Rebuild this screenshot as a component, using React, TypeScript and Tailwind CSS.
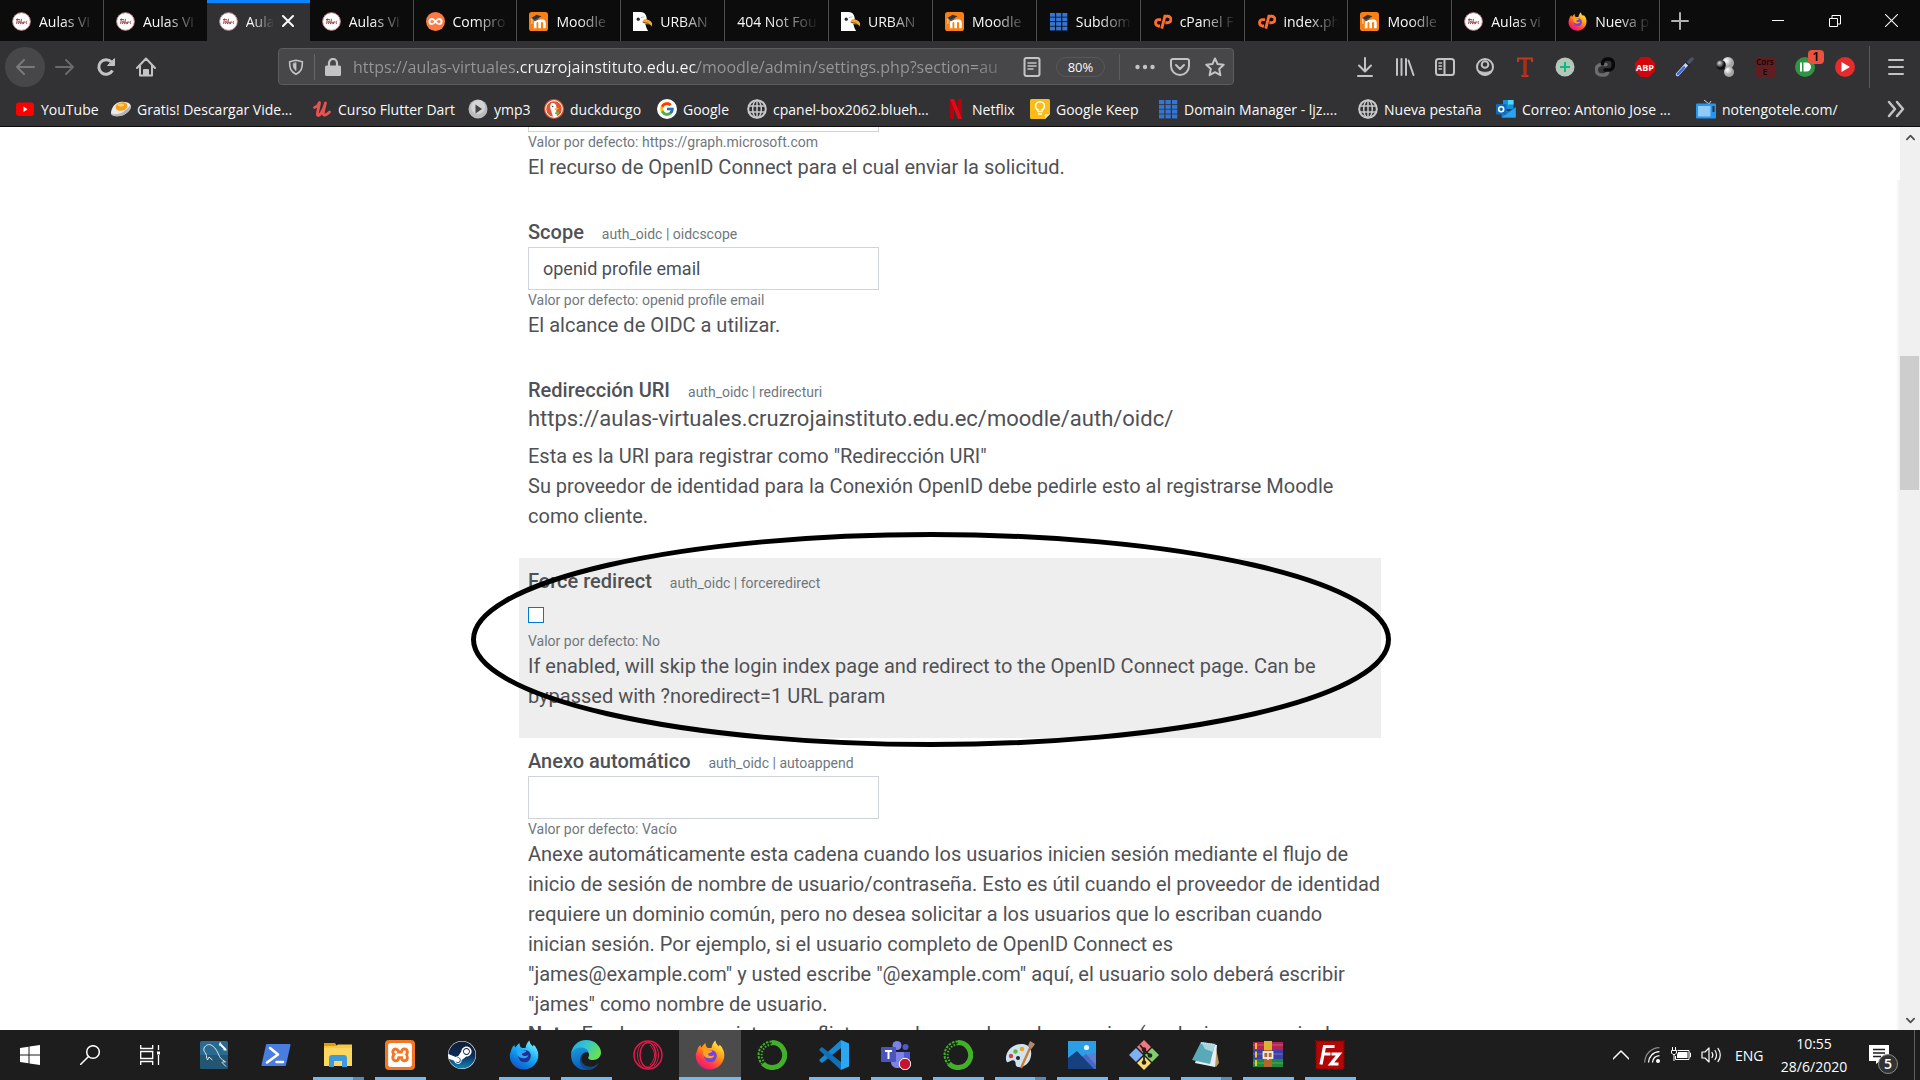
import React, { useState } from "react";
import { FcGoogle } from "react-icons/fc";
import { SiXampp } from "react-icons/si";
import { FaSteam } from "react-icons/fa";

type IconProps = { className?: string };
type Icon = (props: IconProps) => React.ReactElement;

/* ---------- Site icons ---------- */

const Aulas: Icon = ({ className }) => (
  <svg viewBox="0 0 20 20" className={className} aria-hidden="true">
    <circle cx="10" cy="10" r="9.3" fill="#fff" stroke="#c98f93" strokeWidth="1" />
    <path
      d="M4.500 8l1.300-.8-1 5.300M6.300 12c1.500.3 2.500-2.600 1.400-2.600s-2 3-.2 3M10 7.200L9 12.700c.4-2 1.700-3 2-2s-.6 2 .3 1.900M12.500 10l-.4 2.400c.5-1.800 1.300-2.600 1.800-2M16 9.500c-1.300 0-1.600 3-.2 2.900M4.500 8h4"
      fill="none"
      stroke="#9c3a40"
      strokeWidth="1"
    />
  </svg>
);

const Moodle: Icon = ({ className }) => (
  <svg viewBox="0 0 20 20" className={className} aria-hidden="true">
    <rect width="20" height="20" rx="3" fill="#f98012" />
    <path
      d="M6.500 17V11.500c0-3.200 4.700-3.200 4.700 0V17M11.200 11.500c0-3.200 5-3.200 5 0V17"
      fill="none"
      stroke="#fff"
      strokeWidth="2.800"
    />
    <path d="M2 6.500L8 3l5 1.500-6.500 4.200z" fill="#333" />
    <path d="M3 6.500v6" stroke="#fff" strokeWidth=".8" />
    <path d="M5 8.500l5-2.500v2l-4 2z" fill="#555" />
  </svg>
);

const Compro: Icon = ({ className }) => (
  <svg viewBox="0 0 20 20" className={className} aria-hidden="true">
    <circle cx="10" cy="10" r="10" fill="#ff7a42" />
    <path
      d="M10 10c-1.500-2-2.500-2.700-3.700-2.700a2.700 2.700 0 100 5.400C7.500 12.700 8.500 12 10 10s2.500-2.700 3.700-2.700a2.700 2.700 0 110 5.400C12.500 12.700 11.500 12 10 10z"
      fill="none"
      stroke="#fff"
      strokeWidth="2"
    />
  </svg>
);

const Gull: Icon = ({ className }) => (
  <svg viewBox="0 0 20 20" className={className} aria-hidden="true">
    <path d="M0 0h8c4 0 6 3 6.500 6.500L13 11c0 3 1 6 3 9H0z" fill="#fff" />
    <path d="M11 8c3-1 7 0 9 3.500v4c-1-2-2.500-2.500-4.500-2.500-2 0-4-1-5-2.500z" fill="#f7a934" />
    <path d="M10 10.500c2 1 4.500 1 6.500 1.500" stroke="#7a4b10" fill="none" />
    <circle cx="5.500" cy="7.500" r="1.700" fill="#222" />
    <path d="M8 6l4-1" stroke="#aaa" strokeWidth=".8" />
  </svg>
);

const GridIcon: Icon = ({ className }) => (
  <svg viewBox="0 0 20 20" className={className} aria-hidden="true">
    <g fill="#3575d3">
      {[1, 7.5, 14].map((x) =>
        [1, 5.8, 10.6, 15.4].map((y) => <rect key={x + "-" + y} x={x} y={y} width="5.300" height="4" />)
      )}
    </g>
  </svg>
);

const CPanel: Icon = ({ className }) => (
  <svg viewBox="0 0 20 20" className={className} aria-hidden="true">
    <g fill="none" stroke="#ff6c2c" strokeWidth="3">
      <path d="M8.500 8H5.500a3.400 3.400 0 000 6.700h2" />
      <path d="M9.200 17.500L12.500 4.500h3a3.300 3.300 0 010 6.800h-2.500" />
    </g>
  </svg>
);

const Fox = ({ className, blue = false }: IconProps & { blue?: boolean }) => {
  const id = blue ? "foxBlue" : "foxOrange";
  return (
    <svg viewBox="0 0 30 30" className={className} aria-hidden="true">
      <defs>
        <linearGradient id={id} x1="0.850" y1="0.050" x2="0.250" y2="1">
          <stop offset="0" stopColor={blue ? "#7df3ff" : "#fff24a"} />
          <stop offset="0.400" stopColor={blue ? "#1fb4f5" : "#ff980e"} />
          <stop offset="0.750" stopColor={blue ? "#0a7be0" : "#ff3647"} />
          <stop offset="1" stopColor={blue ? "#2450b8" : "#e31587"} />
        </linearGradient>
      </defs>
      <path
        d="M2 11c.5-3 2-5 3.500-6 0 1 .5 2 1 2.500C7.500 6 9 4 10.500 3c0 2.500.5 4 2.500 5h3.500C17 5 18 2.500 20.500.5c0 3 2 4 3.500 6 .3-.6.500-1.200.5-2 3 3 4.800 6.500 4.800 10.500C29.300 23 23 29.500 15 29.500S.8 23.300.8 16c0-2 .4-3.500 1.200-5z"
        fill={`url(#${id})`}
      />
      <circle cx="15.500" cy="16" r="6.300" fill={blue ? "#20308f" : "#7542e5"} />
      <path
        d="M6.500 8.500c3-.8 5.500.2 6.500 1.500l4.500.5c-.4 1.800-2.500 2.300-4 3-1 .7-.6 1.800 1 2.300 2 .7 4-.8 5-.3-1.500 3-5.500 3.500-8.500 2-2.500-1.400-3.500-4-2.500-6z"
        fill={blue ? "#2ba5f7" : "#ffa41b"}
      />
    </svg>
  );
};

const FoxTab: Icon = ({ className }) => <Fox className={className} />;

const YouTube: Icon = ({ className }) => (
  <svg viewBox="0 0 20 20" className={className} aria-hidden="true">
    <rect x="1" y="3.500" width="18" height="13.500" rx="3" fill="#f00" />
    <path d="M8.500 7.500l4 2.700-4 2.800z" fill="#fff" />
  </svg>
);

const Egg: Icon = ({ className }) => (
  <svg viewBox="0 0 20 20" className={className} aria-hidden="true">
    <path d="M0 14c0-3 2-8 6-10s12-1.500 13.500 2-2 7-6 9.500S0 18 0 14z" fill="#e9e9e9" />
    <path d="M0 14c3 2.500 9 1 12-1s6-5 7.500-7c1 4-3 8-7 10S0 18 0 14z" fill="#b5b5b5" />
    <ellipse cx="10.500" cy="7.500" rx="6" ry="4.200" fill="#fb9e17" transform="rotate(-15 10.500 7.500)" />
    <ellipse cx="10" cy="6" rx="3" ry="1.500" fill="#ffd36b" />
  </svg>
);

const Udemy: Icon = ({ className }) => (
  <svg viewBox="0 0 20 20" className={className} aria-hidden="true">
    <path
      d="M2.500 8.500C4.500 8 6.500 6 7.500 3.500 7.500 8 4.500 14 5.500 16c1.500 2 5.500-3 8-12-1.500 6-3 11-1.500 12 1.500.5 3.500-1 5.500-3"
      fill="none"
      stroke="#ea5252"
      strokeWidth="2.800"
      strokeLinecap="round"
      strokeLinejoin="round"
    />
  </svg>
);

const Ymp3: Icon = ({ className }) => (
  <svg viewBox="0 0 20 20" className={className} aria-hidden="true">
    <circle cx="10" cy="10" r="9.500" fill="#b9bcbb" />
    <circle cx="10" cy="8" r="7" fill="#d3d5d4" />
    <path d="M7.500 5.500l6.500 4.500-6.500 4.500z" fill="#444" />
  </svg>
);

const Duck: Icon = ({ className }) => (
  <svg viewBox="0 0 20 20" className={className} aria-hidden="true">
    <circle cx="10" cy="10" r="10" fill="#de5833" />
    <circle cx="10" cy="10" r="8.300" fill="none" stroke="#fff" strokeWidth="1" />
    <path d="M7 4.500c3-1.500 5.500.5 5.500 4v2c-1 2 .5 5 .5 7.300-2 .6-3.500.4-4 0C8 14 6.500 10 6 7.500z" fill="#fff" />
    <path d="M10.500 9.500l4.500-.6c0 1-2 1.500-4.300 2.200z" fill="#fdb913" />
    <path d="M11 13.500l3.500-1v3l-3.500-.5z" fill="#66bd47" />
    <circle cx="8.700" cy="7.500" r=".8" fill="#2d4f8e" />
  </svg>
);

const Google: Icon = ({ className }) => (
  <span className={`${className} flex items-center justify-center rounded-full bg-white`}>
    <FcGoogle size={16} />
  </span>
);

const Globe: Icon = ({ className }) => (
  <svg viewBox="0 0 20 20" className={className} fill="none" stroke="#c9c9ca" strokeWidth="1.500" aria-hidden="true">
    <circle cx="10" cy="10" r="8.800" strokeWidth="2" />
    <ellipse cx="10" cy="10" rx="4.300" ry="8.800" />
    <path d="M10 1v18M2 7h16M2 13h16" />
  </svg>
);

const Netflix: Icon = ({ className }) => (
  <svg viewBox="0 0 20 20" className={className} aria-hidden="true">
    <path d="M4 0h4v20H4zM12 0h4v20h-4z" fill="#b1060f" />
    <path d="M4 0h4l8 20h-4z" fill="#e50914" />
  </svg>
);

const Keep: Icon = ({ className }) => (
  <svg viewBox="0 0 20 20" className={className} aria-hidden="true">
    <path d="M1.500 0h17A1.500 1.500 0 0120 1.500V15l-5 5H1.500A1.500 1.500 0 010 18.500v-17A1.500 1.500 0 011.500 0z" fill="#fbbc18" />
    <path d="M15 20v-5h5z" fill="#fde293" />
    <path
      d="M8 12.500v-1.500C6 9.800 5.500 8.500 5.500 7.300a4.500 4.500 0 019 0c0 1.200-.5 2.500-2.500 3.700v1.500zM8 15h4"
      fill="none"
      stroke="#fff"
      strokeWidth="1.500"
    />
  </svg>
);

const Outlook: Icon = ({ className }) => (
  <svg viewBox="0 0 20 20" className={className} aria-hidden="true">
    <path d="M7 1h10.500v9H7z" fill="#1490df" />
    <path d="M12 1h5.500v4.500H12z" fill="#50d9ff" />
    <path d="M5.500 8l7 4.500L20 8v9.500a1 1 0 01-1 1H6.500a1 1 0 01-1-1z" fill="#1a7fd4" />
    <path d="M5.500 18.500l14-9.500v9.500z" fill="#2aa4f0" />
    <rect y="5" width="10.500" height="10.500" rx="1" fill="#0f6cbd" />
    <circle cx="5.200" cy="10.200" r="2.500" fill="none" stroke="#fff" strokeWidth="1.500" />
  </svg>
);

const Television: Icon = ({ className }) => (
  <svg viewBox="0 0 20 20" className={className} aria-hidden="true">
    <path d="M8 1l5 4 2-3" fill="none" stroke="#cfd8dc" strokeWidth="1" />
    <rect y="4.500" width="20" height="15" rx="1" fill="#2196f3" />
    <rect x="2" y="7" width="12.500" height="10.500" fill="#90caf9" />
    <path d="M16.500 7h2v6h-2z" fill="#263238" />
  </svg>
);

/* ---------- Toolbar icons ---------- */

const Line = ({ className, children, w = 2, box = 20 }: IconProps & { children: React.ReactNode; w?: number; box?: number }) => (
  <svg
    viewBox={`0 0 ${box} ${box}`}
    className={className}
    fill="none"
    stroke="currentColor"
    strokeWidth={w}
    strokeLinecap="round"
    strokeLinejoin="round"
    aria-hidden="true"
  >
    {children}
  </svg>
);

const Download: Icon = ({ className }) => (
  <Line className={className}><path d="M10 1v13M4 8.500l6 6 6-6M3 19h14" /></Line>
);
const Library: Icon = ({ className }) => (
  <Line className={className}><path d="M2 2v16M6.500 2v16M11 2v16M13.500 3.500l5 14.500" /></Line>
);
const Sidebar: Icon = ({ className }) => (
  <Line className={className}>
    <rect x="1" y="2" width="18" height="16" rx="2.500" />
    <path d="M9.500 2v16" />
    <path d="M4 6h2.500M4 9h2.500M4 12h2.500" strokeWidth="1.500" />
  </Line>
);
const Account: Icon = ({ className }) => (
  <Line className={className}>
    <circle cx="10" cy="10" r="8" />
    <circle cx="10" cy="7.500" r="3.300" />
    <path d="M3.500 13.500c3.500 2.500 9.500 2.500 13 0-1 3-3.500 4.500-6.500 4.500s-5.500-1.500-6.500-4.500z" fill="currentColor" strokeWidth="1" />
  </Line>
);
const LetterT: Icon = ({ className }) => (
  <svg viewBox="0 0 20 20" className={className} aria-hidden="true">
    <path d="M3 5V1.500h14V5M6.500 19h7" fill="none" stroke="#c2371f" strokeWidth="2" />
    <path d="M10 2v17" stroke="#b02c18" strokeWidth="3.500" />
  </svg>
);
const PlusDisc: Icon = ({ className }) => (
  <svg viewBox="0 0 20 20" className={className} aria-hidden="true">
    <circle cx="10" cy="10" r="9.500" fill="#b3c8bb" />
    <path d="M10 5v10M5 10h10" stroke="#10b981" strokeWidth="2" />
  </svg>
);
const Chain: Icon = ({ className }) => (
  <svg viewBox="0 0 20 20" className={className} fill="none" strokeWidth="3.500" strokeLinecap="round" aria-hidden="true">
    <path d="M11 7.500H6.500a4.700 4.700 0 000 10.500H9a4.500 4.500 0 004-4" stroke="#6d6d70" />
    <path d="M7.500 7A4.800 4.800 0 0112 2h2a4.500 4.500 0 014.300 5v1.500a4.500 4.500 0 01-4.300 4.500H10" stroke="#080808" />
  </svg>
);
const AdBlock: Icon = ({ className }) => (
  <svg viewBox="0 0 20 20" className={className} aria-hidden="true">
    <path d="M6 0h8l6 6v8l-6 6H6l-6-6V6z" fill="#d3050b" />
    <text x="10" y="13.500" textAnchor="middle" fontSize="9" fontWeight="700" fill="#fff" fontFamily="Open Sans, sans-serif">ABP</text>
  </svg>
);
const Dropper: Icon = ({ className }) => (
  <svg viewBox="0 0 20 20" className={className} strokeLinecap="round" aria-hidden="true">
    <path d="M2.500 17.500L12 7" stroke="#c9d6f5" strokeWidth="3.500" />
    <path d="M3 17l6-6.500" stroke="#3f66d8" strokeWidth="2.500" />
    <path d="M13 6l4-4" stroke="#4b5663" strokeWidth="3.500" />
    <path d="M11 5.500l4 3.500" stroke="#22282f" strokeWidth="1.500" />
  </svg>
);
const Spheres: Icon = ({ className }) => (
  <svg viewBox="0 0 20 20" className={className} aria-hidden="true">
    <defs>
      <radialGradient id="sphLight" cx="0.350" cy="0.300"><stop offset="0" stopColor="#fff" /><stop offset="1" stopColor="#a5a5a5" /></radialGradient>
      <radialGradient id="sphDark" cx="0.350" cy="0.300"><stop offset="0" stopColor="#ddd" /><stop offset="1" stopColor="#111" /></radialGradient>
    </defs>
    <circle cx="13" cy="6" r="6" fill="url(#sphLight)" />
    <circle cx="6" cy="8" r="4.800" fill="url(#sphDark)" />
    <circle cx="14" cy="15" r="5" fill="url(#sphLight)" />
  </svg>
);
const Cors: Icon = ({ className }) => (
  <svg viewBox="0 0 20 20" className={className} aria-hidden="true">
    <rect width="20" height="20" fill="#5f1f22" />
    <g fontSize="8" textAnchor="middle" fill="#160506" fontFamily="Noto Sans, sans-serif" fontWeight="600">
      <text x="10" y="8">Cors</text>
      <text x="10" y="18">E</text>
    </g>
  </svg>
);
const PushDisc: Icon = ({ className }) => (
  <svg viewBox="0 0 20 20" className={className} aria-hidden="true">
    <circle cx="10" cy="10" r="10" fill="#2f9444" />
    <path d="M5 5.500h2v9H5zM8.500 5.500h3a4.500 4.500 0 010 9h-3z" fill="#fff" />
  </svg>
);
const PlayDisc: Icon = ({ className }) => (
  <svg viewBox="0 0 20 20" className={className} aria-hidden="true">
    <circle cx="10" cy="10" r="10" fill="#e62b2d" />
    <path d="M6.500 5l8.500 5-8.500 5z" fill="#fff" />
  </svg>
);

/* ---------- Taskbar icons ---------- */

const Workbench: Icon = ({ className }) => (
  <svg viewBox="0 0 30 30" className={className} aria-hidden="true">
    <rect x="1" y="1" width="28" height="28" rx="2" fill="#2b6a8f" />
    <path d="M1 15h28v12a2 2 0 01-2 2H3a2 2 0 01-2-2z" fill="#235672" />
    <path
      d="M5 8c1.500-3 5-4.500 8-2.500 4 2.500 6 7.500 7.500 11 1 2.500 4.500 4 6 5.500-2-.3-3.500 0-3.500.5l4 4M5 8c-1 3 1 4 2 6 .8 2 .3 4 1.500 6l1.500-3 3.500 3"
      fill="none"
      stroke="#d9e8f0"
      strokeWidth="1"
    />
    <path d="M21.500 4.500l5 5" stroke="#fff" strokeWidth="2" />
    <path d="M20.500 5.500l1-3M24.500 9.500l3 .5" stroke="#fff" strokeWidth="1.500" />
  </svg>
);
const PowerShell: Icon = ({ className }) => (
  <svg viewBox="0 0 30 30" className={className} aria-hidden="true">
    <path d="M6 4h22.500a1 1 0 011 1.200L25 25a1 1 0 01-1 1H1.500a1 1 0 01-1-1.200L5 5a1 1 0 011-1z" fill="#4a7de0" />
    <path d="M9 8l8 6.500-11 8M15.500 22h6.500" fill="none" stroke="#fff" strokeWidth="2.500" strokeLinecap="round" strokeLinejoin="round" />
  </svg>
);
const Explorer: Icon = ({ className }) => (
  <svg viewBox="0 0 30 30" className={className} aria-hidden="true">
    <path d="M1 3h11l2 3H1z" fill="#e09c0b" />
    <path d="M1 6h28v20H1z" fill="#ffd75e" />
    <path d="M1 6h12l2-1.500h14V8H1z" fill="#f9c944" />
    <path d="M6 27v-9a3 3 0 013-3h12a3 3 0 013 3v9h-5v-6h-8v6z" fill="#3c9be0" />
  </svg>
);
const Xampp: Icon = ({ className }) => (
  <span className={`${className} flex items-center justify-center rounded bg-[#f37623]`}>
    <SiXampp size={24} color="#fff" />
  </span>
);
const Steam: Icon = ({ className }) => (
  <span className={`${className} flex items-center justify-center`}>
    <span className="flex h-7 w-7 items-center justify-center rounded-full bg-white">
      <svg width="0" height="0" aria-hidden="true">
        <defs>
          <linearGradient id="steam" x1="0" y1="0" x2="0" y2="1">
            <stop offset="0" stopColor="#111d35" />
            <stop offset="0.500" stopColor="#0b2a55" />
            <stop offset="1" stopColor="#1387b8" />
          </linearGradient>
        </defs>
      </svg>
      <FaSteam className="h-7 w-7 shrink-0" fill="url(#steam)" />
    </span>
  </span>
);
const FoxDev: Icon = ({ className }) => <Fox className={className} blue />;
const Edge: Icon = ({ className }) => (
  <svg viewBox="0 0 30 30" className={className} aria-hidden="true">
    <defs>
      <linearGradient id="edgeTop" x1="0" y1="0" x2="1" y2="0.500">
        <stop offset="0" stopColor="#1ea4dc" />
        <stop offset="0.500" stopColor="#34c6cf" />
        <stop offset="1" stopColor="#66e054" />
      </linearGradient>
      <linearGradient id="edgeLow" x1="0" y1="0" x2="0.300" y2="1">
        <stop offset="0" stopColor="#1b9de2" />
        <stop offset="1" stopColor="#0b5cb5" />
      </linearGradient>
    </defs>
    <path d="M0 14C1 6 7 0 15 0c9 0 15 6.500 15 12.500 0 4.500-3.500 7.500-8 7.500-4 0-5.500-1.500-4.500-3 1.500-2.500 0-6-4-6.500C8 9.500 2 11 0 14z" fill="url(#edgeTop)" />
    <path d="M0 15c1-5 5-7.500 9.500-7.500 4 0 7.500 2 8.200 5C13 11 9.500 15 9.500 19c0 6 4 10 8 10.700C8 31.500 0 25 0 15z" fill="url(#edgeLow)" />
    <path d="M12 14c-4 6 0 14 9.500 12.500 2.500-.5 4.500-2 6.500-4-1.500 4-6 7.500-11 7.500C9 29 6.500 19 12 14z" fill="#114a8b" />
  </svg>
);
const Opera: Icon = ({ className }) => (
  <svg viewBox="0 0 30 30" className={className} fill="none" stroke="#e3194b" aria-hidden="true">
    <circle cx="15" cy="15" r="14" strokeWidth="1.500" />
    <ellipse cx="15" cy="15" rx="8" ry="12.500" strokeWidth="1.500" />
    <path d="M9 3.500C3 8 3 22 9 26.500M21 4c6 5 6 17 0 22M17 5c6 6 6 14 0 20" strokeWidth="1" />
  </svg>
);
const Anaconda: Icon = ({ className }) => (
  <svg viewBox="0 0 30 30" className={className} fill="none" stroke="#43b02a" aria-hidden="true">
    <path d="M15 2.500a12.500 12.500 0 11-9 21" strokeWidth="5" />
    <path d="M15 1.500A13.500 13.500 0 005 24" strokeWidth="2" strokeDasharray="2.500 1.200" />
    <path d="M15 4.500A10.500 10.500 0 006.500 21" strokeWidth="2" strokeDasharray="1.500 1.500" />
  </svg>
);
const Code: Icon = ({ className }) => (
  <svg viewBox="0 0 30 30" className={className} aria-hidden="true">
    <path d="M22 0v8L3 23l-2.500-2v-1.500z" fill="#1687d0" />
    <path d="M22 30v-8L3 7 .5 9v1.500z" fill="#0f70b8" />
    <path d="M22 0l8 3.500v23L22 30z" fill="#2aa7f2" />
  </svg>
);
const Teams: Icon = ({ className }) => (
  <svg viewBox="0 0 30 30" className={className} aria-hidden="true">
    <circle cx="24.500" cy="7" r="3" fill="#5059c9" />
    <circle cx="16" cy="5.500" r="4.500" fill="#7b83eb" />
    <path d="M20 12h9v9a5 5 0 01-9 2z" fill="#5059c9" />
    <path d="M10 12h13v10c0 8-13 8-13 0z" fill="#7b83eb" />
    <rect y="7" width="15" height="15" rx="1" fill="#4b53bc" />
    <path d="M4 11h7M7.500 11v8" stroke="#fff" strokeWidth="2" />
    <circle cx="24" cy="24" r="5.700" fill="#c4122f" stroke="#fff" strokeWidth="1" />
  </svg>
);
const Paint: Icon = ({ className }) => (
  <svg viewBox="0 0 30 30" className={className} aria-hidden="true">
    <path d="M1 17C2 9 10 3 18 4c7 1 9 6 8 12-1 7-7 12-13 11-4-1-1-5-4-6.500C6 19.500 4 23 2 22c-1-1-1.200-3-1-5z" fill="#cfe3f1" />
    <circle cx="6" cy="16" r="2.200" fill="#d9403a" />
    <circle cx="10.500" cy="11.500" r="2.200" fill="#58b947" />
    <circle cx="17" cy="9" r="2.300" fill="#f4a51c" />
    <circle cx="13" cy="18" r="2" fill="#252525" />
    <path d="M16 28l9-20" stroke="#d07a2d" strokeWidth="2.300" />
    <path d="M23 6l2-5 5 3-3.500 5z" fill="#b38a6b" />
  </svg>
);
const Photos: Icon = ({ className }) => (
  <svg viewBox="0 0 30 30" className={className} aria-hidden="true">
    <rect x="1" y="1" width="28" height="28" fill="#2b9fe6" />
    <path d="M29 13v16H12l8-14 2-1z" fill="#5b7fd3" />
    <path d="M15 17l4-3 10 11v4H15z" fill="#4668c8" />
    <path d="M1 18l9-7 17 18H1z" fill="#17407e" />
    <circle cx="19.500" cy="7.500" r="2.600" fill="#eaf5fc" />
  </svg>
);
const Git: Icon = ({ className }) => (
  <svg viewBox="0 0 30 30" className={className} aria-hidden="true">
    <path d="M15 0l7 7-7 7-7-7z" fill="#f2787b" />
    <path d="M7 8l7 7-7 7-7-7z" fill="#7fb2f5" />
    <path d="M23 8l7 7-7 7-7-7z" fill="#86cc6a" />
    <path d="M15 16l7 7-7 7-7-7z" fill="#fbdc6d" />
    <path d="M11 5l4 5v13M15 10l6 5.500" stroke="#222" strokeWidth="1.800" fill="none" />
    <circle cx="15" cy="9.500" r="2.300" fill="#222" />
    <circle cx="21" cy="15.500" r="2.300" fill="#222" />
    <circle cx="15" cy="22.500" r="2.300" fill="#222" />
  </svg>
);
const Notepad: Icon = ({ className }) => (
  <svg viewBox="0 0 30 30" className={className} aria-hidden="true">
    <path d="M24 3l4 20-3 4-6-4z" fill="#b99a62" />
    <path d="M11 3l15 2-2 22-20-4z" fill="#e8eef0" />
    <path d="M10 2l14 2-5 20L1 20z" fill="#5aa9b8" />
    <path d="M10 2l14 2-2 8-8-3z" fill="#a8d4dc" />
    <path d="M10 3l14 2" stroke="#ddd" strokeWidth="1.500" strokeDasharray="1 1" />
  </svg>
);
const WinRar: Icon = ({ className }) => (
  <svg viewBox="0 0 30 30" className={className} aria-hidden="true">
    <rect y="2" width="30" height="8" fill="#b32252" />
    <rect y="10" width="30" height="9" fill="#3b3fa6" />
    <rect y="19" width="30" height="8" fill="#1c8a3a" />
    <path d="M0 5h30M0 14h30M0 23h30" stroke="#fff" strokeOpacity=".25" />
    <path d="M3 3v6M3 11.500v6M3 20v6" stroke="#f2c230" strokeWidth="2" />
    <rect x="11" y="1" width="8" height="9" fill="#e0b030" />
    <rect x="11" y="10" width="8" height="17" fill="#b5642a" />
    <rect x="10.500" y="12" width="9" height="6" fill="none" stroke="#eee" strokeWidth="1.800" />
    <path d="M15 13v7" stroke="#eee" strokeWidth="1.500" />
  </svg>
);
const FileZilla: Icon = ({ className }) => (
  <svg viewBox="0 0 30 30" className={className} aria-hidden="true">
    <rect x="1" y="1" width="28" height="28" fill="#b30606" stroke="#8a0000" strokeWidth="2" strokeDasharray="1.500 1.500" />
    <path
      d="M6 24.500L9.500 6.500h10M8.500 14h7M16.500 14h7.500l-8 10h7.500"
      fill="none"
      stroke="#fff"
      strokeWidth="3.200"
    />
  </svg>
);

/* ---------- Data ---------- */

const tabs: { icon?: Icon; title: string; active?: boolean }[] = [
  { icon: Aulas, title: "Aulas Vi" },
  { icon: Aulas, title: "Aulas Vi" },
  { icon: Aulas, title: "Aula", active: true },
  { icon: Aulas, title: "Aulas Vi" },
  { icon: Compro, title: "Compro" },
  { icon: Moodle, title: "Moodle" },
  { icon: Gull, title: "URBAN" },
  { title: "404 Not Fou" },
  { icon: Gull, title: "URBAN" },
  { icon: Moodle, title: "Moodle" },
  { icon: GridIcon, title: "Subdom" },
  { icon: CPanel, title: "cPanel F" },
  { icon: CPanel, title: "index.ph" },
  { icon: Moodle, title: "Moodle" },
  { icon: Aulas, title: "Aulas vi" },
  { icon: FoxTab, title: "Nueva p" },
];

const bookmarks: { icon: Icon; title: string; width: string }[] = [
  { icon: YouTube, title: "YouTube", width: "w-[96px]" },
  { icon: Egg, title: "Gratis! Descargar Vide...", width: "w-[201px]" },
  { icon: Udemy, title: "Curso Flutter Dart", width: "w-[156px]" },
  { icon: Ymp3, title: "ymp3", width: "w-[76px]" },
  { icon: Duck, title: "duckducgo", width: "w-[113px]" },
  { icon: Google, title: "Google", width: "w-[90px]" },
  { icon: Globe, title: "cpanel-box2062.blueh...", width: "w-[199px]" },
  { icon: Netflix, title: "Netflix", width: "w-[84px]" },
  { icon: Keep, title: "Google Keep", width: "w-[128px]" },
  { icon: GridIcon, title: "Domain Manager - ljz....", width: "w-[200px]" },
  { icon: Globe, title: "Nueva pestaña", width: "w-[138px]" },
  { icon: Outlook, title: "Correo: Antonio Jose ...", width: "w-[200px]" },
  { icon: Television, title: "notengotele.com/", width: "w-[160px]" },
];

const extensions: { icon: Icon; label: string; badge?: string }[] = [
  { icon: Download, label: "Descargas" },
  { icon: Library, label: "Catálogo" },
  { icon: Sidebar, label: "Barra lateral" },
  { icon: Account, label: "Cuenta" },
  { icon: LetterT, label: "Texto" },
  { icon: PlusDisc, label: "Agregar" },
  { icon: Chain, label: "Enlace" },
  { icon: AdBlock, label: "Bloqueador" },
  { icon: Dropper, label: "Cuentagotas" },
  { icon: Spheres, label: "Esferas" },
  { icon: Cors, label: "Cors" },
  { icon: PushDisc, label: "Avisos", badge: "1" },
  { icon: PlayDisc, label: "Reproducir" },
];

const apps: { icon: Icon; label: string; state?: "open" | "many" | "active" }[] = [
  { icon: Workbench, label: "MySQL Workbench" },
  { icon: PowerShell, label: "PowerShell" },
  { icon: Explorer, label: "Explorador", state: "many" },
  { icon: Xampp, label: "XAMPP", state: "open" },
  { icon: Steam, label: "Steam" },
  { icon: FoxDev, label: "Firefox Developer", state: "open" },
  { icon: Edge, label: "Edge", state: "open" },
  { icon: Opera, label: "Opera" },
  { icon: FoxTab, label: "Firefox", state: "active" },
  { icon: Anaconda, label: "Anaconda" },
  { icon: Code, label: "Visual Studio Code", state: "open" },
  { icon: Teams, label: "Teams", state: "open" },
  { icon: Anaconda, label: "Anaconda Navigator", state: "open" },
  { icon: Paint, label: "Paint", state: "many" },
  { icon: Photos, label: "Fotos", state: "open" },
  { icon: Git, label: "Git", state: "open" },
  { icon: Notepad, label: "Bloc de notas", state: "many" },
  { icon: WinRar, label: "WinRAR", state: "open" },
  { icon: FileZilla, label: "FileZilla", state: "open" },
];

/* ---------- Browser chrome ---------- */

function TabStrip() {
  return (
    <div className="flex h-[41px] bg-[#0c0c0d] text-[#f9f9fa]">
      <div className="flex min-w-0 flex-1" role="tablist">
        {tabs.map((tab, i) => (
          <button
            key={i}
            role="tab"
            aria-selected={!!tab.active}
            className={
              tab.active
                ? "flex min-w-0 flex-1 items-center gap-2 border-t-[3px] border-[#0a84ff] bg-[#323234] pr-2 pb-[2px] pl-3"
                : i === 1
                  ? "flex min-w-0 flex-1 items-center gap-2 pt-px pr-2 pl-3"
                  : "flex min-w-0 flex-1 items-center gap-2 border-r border-[#4c4c4e] pt-px pr-2 pl-3"
            }
          >
            {tab.icon && <tab.icon className="h-[19px] w-[19px] shrink-0" />}
            <span
              className={
                tab.active
                  ? "min-w-0 flex-1 mask-r-from-20% text-left text-[14px] whitespace-nowrap"
                  : "min-w-0 flex-1 mask-r-from-40% text-left text-[14px] whitespace-nowrap"
              }
            >
              {tab.title}
            </span>
            {tab.active && (
              <Line className="mr-2 h-3 w-3 shrink-0" box={12}>
                <path d="M1 1l10 10M11 1L1 11" />
              </Line>
            )}
          </button>
        ))}
      </div>
      <div className="flex w-[260px] items-center">
        <button aria-label="Nueva pestaña" className="flex w-10 justify-center text-[#b1b1b3]">
          <Line className="h-[18px] w-[18px]" box={18}><path d="M9 1v16M1 9h16" /></Line>
        </button>
        <div className="flex-1" />
        <button aria-label="Minimizar" className="flex w-[57px] justify-center">
          <Line className="h-3 w-3" w={1} box={12}><path d="M0 5.500h12" /></Line>
        </button>
        <button aria-label="Restaurar" className="flex w-[57px] justify-center">
          <svg viewBox="0 0 12 12" className="h-3 w-3" fill="none" stroke="#fff" aria-hidden="true">
            <path d="M.5 3.500h8v8h-8zM3 3V.5h8.500V9H9" />
          </svg>
        </button>
        <button aria-label="Cerrar" className="flex w-[57px] justify-center">
          <Line className="h-[13px] w-[13px]" w={1} box={12}><path d="M0 0l12 12M12 0L0 12" /></Line>
        </button>
      </div>
    </div>
  );
}

function NavBar() {
  const [url, setUrl] = useState("https://aulas-virtuales.cruzrojainstituto.edu.ec/moodle/admin/settings.php?section=au");
  return (
    <div className="flex h-[51px] items-center pl-[5px] text-[#c3c3c4]">
      <div className="flex w-[273px] items-center">
        <button aria-label="Atrás" className="flex h-10 w-10 items-center justify-center rounded-full bg-[#47474a] text-[#79797b]">
          <Line className="h-5 w-5"><path d="M19 10H2M9 3l-7 7 7 7" /></Line>
        </button>
        <button aria-label="Adelante" className="flex h-10 w-10 items-center justify-center text-[#6a6a6c]">
          <Line className="h-5 w-5"><path d="M1 10h17M11 3l7 7-7 7" /></Line>
        </button>
        <button aria-label="Recargar" className="flex h-10 w-[42px] items-center justify-center">
          <Line className="h-5 w-5" w={3}>
            <path d="M16.500 13.500A7.300 7.300 0 1115.500 5" strokeLinecap="butt" />
            <path d="M18.500 2v6.500h-6.500z" fill="currentColor" strokeWidth="1" />
          </Line>
        </button>
        <button aria-label="Inicio" className="flex h-10 w-[38px] items-center justify-center">
          <Line className="h-5 w-5">
            <path d="M1 11l9-9.500 9 9.500M4 9v9.500h12V9" />
            <path d="M8 18v-5h4v5" fill="currentColor" />
          </Line>
        </button>
      </div>
      <div className="flex h-[37px] w-[956px] shrink items-center rounded-sm border border-[#5c5c5f] bg-[#474749] pl-[9px]">
        <Line className="h-[18px] w-4 shrink-0">
          <path d="M10 1.500l8 2c0 8-1 12-8 15.500C3 15.500 2 11.500 2 3.500z" />
          <path d="M10 5v9.500c-2.500-2-3.500-4-3.500-8.500z" fill="currentColor" strokeWidth="1" />
        </Line>
        <div className="mx-[10px] h-[26px] w-px bg-[#68686b]" />
        <svg viewBox="0 0 16 18" className="h-[18px] w-4 shrink-0" aria-hidden="true">
          <path d="M4 8V5a4 4 0 018 0v3" fill="none" stroke="#c3c3c4" strokeWidth="2.200" />
          <rect y="7.500" width="16" height="10.500" rx="1.500" fill="#c3c3c4" />
        </svg>
        <input
          aria-label="Dirección"
          value={url}
          onChange={(e) => setUrl(e.target.value)}
          className="ml-3 h-8 min-w-0 flex-1 bg-[linear-gradient(90deg,#97979a_164px,#f9f9fa_164px,#f9f9fa_344px,#97979a_344px,#97979a_620px,#47474a_670px)] bg-clip-text text-[16px] text-transparent caret-white outline-none"
        />
        <button aria-label="Vista de lectura" className="ml-[7px]">
          <Line className="h-5 w-5"><rect x="2.500" y="1" width="15" height="18" rx="2" /><path d="M6 6h8M6 9h8M6 12h5" strokeWidth="1.500" /></Line>
        </button>
        <button className="ml-[14px] h-5 w-[49px] rounded-full border border-[#58585b] text-[13px] leading-[18px] text-[#f9f9fa]">80%</button>
        <div className="mx-[14px] h-[26px] w-px bg-[#5c5c62]" />
        <button aria-label="Acciones" className="ml-px">
          <svg viewBox="0 0 20 20" className="h-5 w-5" fill="currentColor" aria-hidden="true">
            <circle cx="2.500" cy="10" r="2.200" /><circle cx="10" cy="10" r="2.200" /><circle cx="17.500" cy="10" r="2.200" />
          </svg>
        </button>
        <button aria-label="Guardar en Pocket" className="ml-[15px]">
          <Line className="h-5 w-5"><path d="M3 2h14a2 2 0 012 2v5a9 9 0 01-18 0V4a2 2 0 012-2z" /><path d="M6 8l4 4 4-4" /></Line>
        </button>
        <button aria-label="Marcador" className="mr-2 ml-[15px]">
          <Line className="h-5 w-5"><path d="M10 1.500l2.600 5.600 6.100.7-4.500 4.200 1.200 6.200L10 15.200l-5.400 3 1.200-6.200L1.300 7.800l6.100-.7z" /></Line>
        </button>
      </div>
      <div className="flex-1" />
      <div className="flex">
        {extensions.map(({ icon: I, label, badge }) => (
          <button key={label} aria-label={label} className="relative flex h-10 w-10 items-center justify-center">
            <I className="h-5 w-5" />
            {badge && (
              <span className="absolute top-[3px] left-[23px] flex h-[14px] w-4 items-center justify-center rounded-sm bg-[#e8523f] text-[13px] leading-none font-semibold text-black">
                {badge}
              </span>
            )}
          </button>
        ))}
      </div>
      <div className="ml-1 h-[42px] w-px bg-[#5a5a5c]" />
      <button aria-label="Menú" className="mr-1 flex h-10 w-[46px] items-center justify-center pl-[5px]">
        <Line className="h-4 w-4" box={16}><path d="M1 1h14M1 8h14M1 15h14" /></Line>
      </button>
    </div>
  );
}

function BookmarksBar() {
  return (
    <nav className="flex h-[35px] items-center border-b border-[#0c0c0d] pl-[15px] text-[14px] text-[#f9f9fa]">
      {bookmarks.map(({ icon: I, title, width }, i) => (
        <a key={i} href="#" className={`${width} flex shrink-0 items-center gap-[6px] whitespace-nowrap`}>
          <I className="h-5 w-5 shrink-0" />
          {title}
        </a>
      ))}
      <div className="flex-1" />
      <button aria-label="Más marcadores" className="mr-[15px] text-[#c3c3c4]">
        <Line className="h-[18px] w-[18px]" box={18} w={2.5}><path d="M2 2l6 7-6 7M10 2l6 7-6 7" /></Line>
      </button>
    </nav>
  );
}

/* ---------- Settings page ---------- */

function Setting({
  id,
  label,
  name,
  highlight,
  children,
}: {
  id?: string;
  label: string;
  name: string;
  highlight?: boolean;
  children: React.ReactNode;
}) {
  return (
    <section className={highlight ? "relative bg-[#eeeeee] px-[9px] pt-2 pb-[27px]" : "px-[9px] pt-2 pb-[27px]"}>
      <div className="flex h-[30px] items-baseline gap-[18px]">
        {id ? (
          <label htmlFor={id} className="font-medium">{label}</label>
        ) : (
          <span className="font-medium">{label}</span>
        )}
        <span className="text-[14px] text-[#6f777e]">{name}</span>
      </div>
      {children}
    </section>
  );
}

const Hint = ({ children }: { children: React.ReactNode }) => (
  <p className="text-[14px] leading-5 text-[#6f777e]">{children}</p>
);

const TextField = ({ id, initial }: { id: string; initial: string }) => {
  const [value, setValue] = useState(initial);
  return (
    <input
      id={id}
      aria-label={id}
      value={value}
      onChange={(e) => setValue(e.target.value)}
      className="block h-[43px] w-[351px] border border-[#ced4da] bg-white px-[14px] text-[18px] text-[#495057] outline-none"
    />
  );
};

function SettingsPage() {
  const [force, setForce] = useState(false);
  return (
    <div className="flex min-h-0 flex-1 bg-white">
      <main className="relative min-w-0 flex-1 overflow-hidden font-[Roboto,sans-serif] text-[20px] leading-[30px] text-[#4f5155]">
        <div className="mx-auto w-full max-w-[862px]">
          <section className="-mt-[38px] px-[9px] pb-[27px]">
            <TextField id="oidcresource" initial="" />
            <Hint>Valor por defecto: https://graph.microsoft.com</Hint>
            <p>El recurso de OpenID Connect para el cual enviar la solicitud.</p>
          </section>
          <Setting id="oidcscope" label="Scope" name="auth_oidc | oidcscope">
            <TextField id="oidcscope" initial="openid profile email" />
            <Hint>Valor por defecto: openid profile email</Hint>
            <p>El alcance de OIDC a utilizar.</p>
          </Setting>
          <Setting label="Redirección URI" name="auth_oidc | redirecturi">
            <h5 className="mb-2 text-[22px] leading-7">https://aulas-virtuales.cruzrojainstituto.edu.ec/moodle/auth/oidc/</h5>
            <p>
              Esta es la URI para registrar como "Redirección URI"
              <br />
              Su proveedor de identidad para la Conexión OpenID debe pedirle esto al registrarse Moodle como cliente.
            </p>
          </Setting>
          <Setting id="forceredirect" label="Force redirect" name="auth_oidc | forceredirect" highlight>
            <input
              id="forceredirect"
              type="checkbox"
              checked={force}
              onChange={(e) => setForce(e.target.checked)}
              className="mt-[11px] mb-2 block h-4 w-4 appearance-none border border-[#0078d7] bg-white checked:bg-[#0078d7]"
            />
            <Hint>Valor por defecto: No</Hint>
            <p>If enabled, will skip the login index page and redirect to the OpenID Connect page. Can be bypassed with ?noredirect=1 URL param</p>
            <svg
              viewBox="0 0 920 215"
              preserveAspectRatio="none"
              className="pointer-events-none absolute -top-[26px] -left-[48px] h-[215px] w-[920px]"
              aria-hidden="true"
            >
              <ellipse cx="460" cy="107.500" rx="457.500" ry="105" fill="none" stroke="#000" strokeWidth="5" />
            </svg>
          </Setting>
          <Setting id="autoappend" label="Anexo automático" name="auth_oidc | autoappend">
            <TextField id="autoappend" initial="" />
            <Hint>Valor por defecto: Vacío</Hint>
            <p className="-mr-[9px]">
              Anexe automáticamente esta cadena cuando los usuarios inicien sesión mediante el flujo de inicio de sesión de nombre
              de usuario/contraseña. Esto es útil cuando el proveedor de identidad requiere un dominio común, pero no desea
              solicitar a los usuarios que lo escriban cuando inician sesión. Por ejemplo, si el usuario completo de OpenID
              Connect es "james@example.com" y usted escribe "@example.com" aquí, el usuario solo deberá escribir "james" como
              nombre de usuario.
              <br />
              <b>Nota:</b> En el caso que existan conflictos con los nombres de usuarios (es decir un usuario de
            </p>
          </Setting>
        </div>
        <div className="absolute top-[53px] right-0 bottom-0 w-1 bg-linear-to-r from-white to-[#efefef]" />
      </main>
      <div className="flex w-5 flex-col items-center bg-[#f0f0f0] text-[#505050]">
        <button aria-label="Subir" className="flex h-5 w-full items-center justify-center">
          <Line className="h-[9px] w-[9px]" box={10}><path d="M1 7l4-4 4 4" /></Line>
        </button>
        <div className="flex w-full flex-1 flex-col">
          <div className="grow-[209]" />
          <div className="mr-px grow-[134] bg-[#cdcdcd]" />
          <div className="grow-[520]" />
        </div>
        <button aria-label="Bajar" className="flex h-5 w-full items-center justify-center">
          <Line className="h-[9px] w-[9px]" box={10}><path d="M1 3l4 4 4-4" /></Line>
        </button>
      </div>
    </div>
  );
}

/* ---------- Taskbar ---------- */

function Taskbar() {
  return (
    <footer className="flex h-[50px] shrink-0 items-stretch bg-[#1d1d1d] text-white">
      <button aria-label="Inicio" className="flex w-[60px] items-center justify-center">
        <svg viewBox="0 0 20 20" className="h-5 w-5" fill="#fff" aria-hidden="true">
          <path d="M0 3l8.500-1.300v7.800H0zM9.500 1.500L20 0v9.500H9.500zM0 10.500h8.500v7.800L0 17zM9.500 10.500H20V20L9.500 18.500z" />
        </svg>
      </button>
      <button aria-label="Buscar" className="flex w-[60px] items-center justify-center">
        <Line className="h-5 w-5" w={1.5}><circle cx="13" cy="7" r="6.300" /><path d="M8.500 11.500L.5 19.500" /></Line>
      </button>
      <button aria-label="Vista de tareas" className="mr-[3px] flex w-[60px] items-center justify-center">
        <svg viewBox="0 0 20 20" className="h-5 w-5" fill="none" stroke="#fff" strokeWidth="1.300" aria-hidden="true">
          <path d="M.7 0v3.500h12V0M.7 6.500h12v7h-12zM.7 20v-3.500h12V20M18.500 0v5M18.500 10v10" />
          <path d="M17 6.500h3v3h-3z" fill="#fff" stroke="none" />
        </svg>
      </button>
      {apps.map(({ icon: I, label, state }) => (
        <button
          key={label}
          aria-label={label}
          className={
            state === "active"
              ? "flex w-[62px] flex-col items-center justify-between bg-[#4b4b4b] pt-[10px]"
              : "flex w-[62px] flex-col items-center justify-between pt-[10px]"
          }
        >
          <I className="h-[30px] w-[30px]" />
          {state === "active" && <span className="h-[3px] w-full bg-[#76b9ed]" />}
          {state === "open" && <span className="h-[3px] w-[51px] bg-[#76b9ed]" />}
          {state === "many" && <span className="h-[3px] w-[51px] border-r-[11px] border-[#5a8ab2] bg-[#76b9ed]" />}
        </button>
      ))}
      <div className="flex-1" />
      <div className="flex items-center">
        <button aria-label="Iconos ocultos" className="mr-[15px]">
          <Line className="h-4 w-4" w={1.5} box={16}><path d="M0 12l8-8 8 8" /></Line>
        </button>
        <button aria-label="Red" className="mr-[11px]">
          <svg viewBox="0 0 16 16" className="h-4 w-4" fill="none" stroke="#fff" strokeWidth="1.300" aria-hidden="true">
            <path d="M.7 15.500C1 7 7 1 15.500.7" stroke="#8a8a8a" />
            <path d="M4.500 15.500c.3-6 4.500-10.500 11-10.800M8.500 15.500c.3-4 3-6.500 7-6.800" />
            <circle cx="14" cy="14" r="2" fill="#fff" stroke="none" />
          </svg>
        </button>
        <button aria-label="Batería" className="mr-[10px]">
          <svg viewBox="0 0 20 16" className="h-4 w-5" fill="none" stroke="#fff" aria-hidden="true">
            <path d="M6.500 3.500h11.500v9H4.500V9M18.500 6h1v4h-1M1.500 0v3M4.500 0v3M.5 3.500h5V6L4 7.500H2L.5 6zM3 8v6" />
            <path d="M7 5h9.500v6H6V8z" fill="#fff" stroke="none" />
          </svg>
        </button>
        <button aria-label="Volumen" className="mr-[13px]">
          <Line className="h-5 w-[21px]" w={1.2}>
            <path d="M.5 7h3l4-4v14l-4-4h-3zM10.500 7.500c1 1.500 1 3.500 0 5M13.500 5.500c2 2.500 2 6.500 0 9M16.500 3.500c3 3.500 3 9.500 0 13" />
          </Line>
        </button>
        <button className="w-[28px] text-[14px]">ENG</button>
        <button className="ml-[14px] flex w-[74px] flex-col items-center text-[14px] leading-[23px]">
          <span>10:55</span>
          <span>28/6/2020</span>
        </button>
        <button aria-label="Notificaciones" className="relative ml-[18px] h-[50px] w-5">
          <svg viewBox="0 0 20 20" className="-mt-[2px] h-5 w-5" aria-hidden="true">
            <path d="M0 1h20v16h-9l-4 3v-3H0z" fill="#fff" />
            <path d="M4 5.500h12M4 9h12M4 12.500h8" stroke="#1d1d1d" strokeWidth="1.300" />
          </svg>
          <span className="absolute top-[24px] left-[9px] flex h-5 w-5 items-center justify-center rounded-full border border-[#8a8a8a] bg-[#333] text-[14px] leading-none font-semibold">
            5
          </span>
        </button>
        <div className="ml-[25px] h-[50px] w-px bg-[#5f5f5f]" />
        <div className="w-[5px]" />
      </div>
    </footer>
  );
}

export default function App() {
  return (
    <div className="flex h-screen flex-col overflow-hidden font-['Open_Sans','Noto_Sans',sans-serif]">
      <header className="shrink-0 bg-[#323234]">
        <TabStrip />
        <NavBar />
        <BookmarksBar />
      </header>
      <SettingsPage />
      <Taskbar />
    </div>
  );
}
